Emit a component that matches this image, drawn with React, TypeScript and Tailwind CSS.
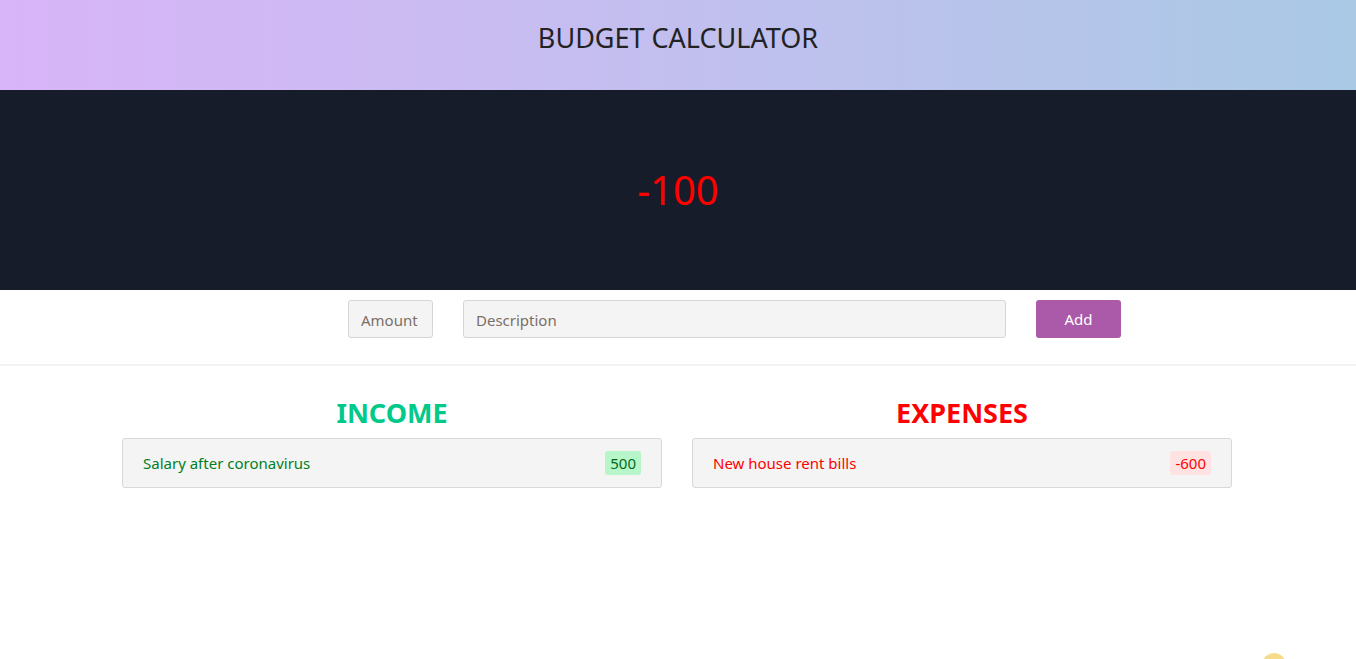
import React from "react";

export default function App() {
  const font = { fontFamily: '"Noto Sans", "Open Sans", sans-serif' };
  return (
    <div className="min-h-[659px] bg-white relative overflow-hidden" style={font}>
      <header className="h-[90px] flex items-center justify-center bg-gradient-to-r from-[#d8b4f8] to-[#a9c9e5]">
        <h1 className="text-[27px] text-[#222] font-normal -mt-[14px]">BUDGET CALCULATOR</h1>
      </header>
      <section className="h-[200px] bg-[#171c2b] flex items-center justify-center">
        <div className="text-[40px] text-[#ff0000] leading-none">-100</div>
      </section>
      <div className="h-[76px] border-b-2 border-[#f2f2f2] flex items-start pt-[10px] pl-[348px] gap-[30px]">
        <input
          placeholder="Amount"
          className="w-[85px] h-[38px] bg-[#f4f4f4] border border-[#d5d5d5] rounded-[3px] px-[12px] pt-px text-[15px] placeholder:text-[#7a6f66] outline-none"
        />
        <input
          placeholder="Description"
          className="w-[543px] h-[38px] bg-[#f4f4f4] border border-[#d5d5d5] rounded-[3px] px-[12px] pt-px text-[15px] placeholder:text-[#7a6f66] outline-none"
        />
        <button className="w-[85px] h-[38px] bg-[#ab5aaa] text-white text-[15px] rounded-[3px]">Add</button>
      </div>
      <div className="w-[1110px] ml-[122px] grid grid-cols-2 gap-[30px] pt-[22px]">
        <div>
          <h2 className="text-center text-[27px] font-bold text-[#00c98a] leading-[50px]">INCOME</h2>
          <div className="h-[50px] bg-[#f4f4f4] border border-[#d8d8d8] rounded-[3px] flex items-center justify-between pl-[20px] pr-[20px]">
            <span className="text-[15px] text-[#007f1f]">Salary after coronavirus</span>
            <span className="text-[15px] text-[#006b1a] bg-[#b6f6c8] rounded-[3px] px-[5px] h-[24px] flex items-center">500</span>
          </div>
        </div>
        <div>
          <h2 className="text-center text-[27px] font-bold text-[#ff0000] leading-[50px]">EXPENSES</h2>
          <div className="h-[50px] bg-[#f4f4f4] border border-[#d8d8d8] rounded-[3px] flex items-center justify-between pl-[20px] pr-[20px]">
            <span className="text-[15px] text-[#ff0000]">New house rent bills</span>
            <span className="text-[15px] text-[#ff0000] bg-[#ffe3e3] rounded-[3px] px-[5px] h-[24px] flex items-center">-600</span>
          </div>
        </div>
      </div>
      <div className="absolute left-[1262px] top-[653px] w-[24px] h-[24px] rounded-full bg-[#f6dc8a]" />
    </div>
  );
}
